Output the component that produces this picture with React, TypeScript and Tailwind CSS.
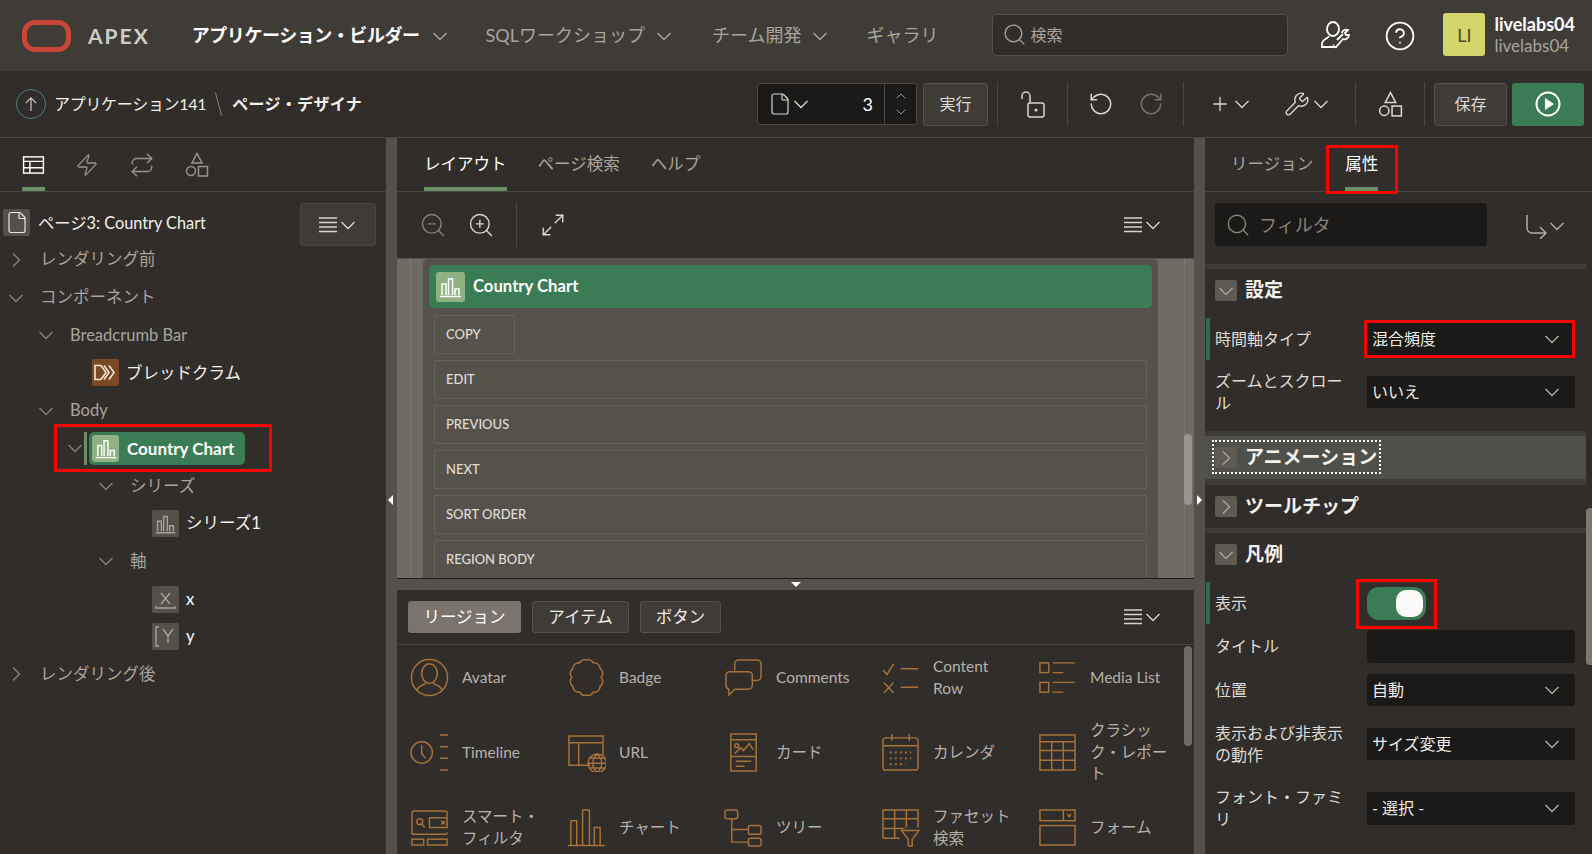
import type { ReactNode } from "react";
import {
  ChevronDown,
  ChevronUp,
  CircleHelp,
  File,
  Maximize2,
  Plus,
  Repeat,
  RotateCcw,
  RotateCw,
  Search,
  Wrench,
  Zap,
  ZoomIn,
  ZoomOut,
} from "lucide-react";

const Chev = ({ className = "" }: { className?: string }) => (
  <svg viewBox="0 0 18 18" className={`w-[18px] h-[18px] shrink-0 ${className}`} fill="none" stroke="currentColor" strokeWidth="1.4">
    <path d="M2.5 6l6.5 6.5L15.5 6" />
  </svg>
);

const ChevR = ({ className = "" }: { className?: string }) => (
  <svg viewBox="0 0 18 18" className={`w-[18px] h-[18px] shrink-0 ${className}`} fill="none" stroke="currentColor" strokeWidth="1.4">
    <path d="M6 2.5l6.5 6.5L6 15.5" />
  </svg>
);

const MenuLines = () => (
  <svg viewBox="0 0 18 16" className="w-[18px] h-4 shrink-0" stroke="currentColor" strokeWidth="1.6">
    <path d="M0 1h18M0 5.5h18M0 10h18M0 14.5h18" />
  </svg>
);

const MenuBtn = () => (
  <div className="flex items-center gap-[2px] text-[#d8d5d0]">
    <MenuLines />
    <Chev />
  </div>
);

const Shapes = ({ className = "" }: { className?: string }) => (
  <svg viewBox="0 0 24 26" className={className} fill="none" stroke="currentColor" strokeWidth="1.5">
    <path d="M12 1.5l5 9.5H7z" />
    <circle cx="6" cy="19" r="4.5" />
    <rect x="13.5" y="14.5" width="9" height="9.5" />
  </svg>
);

const Bars = ({ className = "" }: { className?: string }) => (
  <svg viewBox="0 0 27 27" className={className} fill="none" stroke="currentColor" strokeWidth="1.5">
    <path d="M5 22V11h4v11M11.5 22V6h4v16M18 22v-6h4v6M3 23.5h21" />
  </svg>
);

const P = ({ children }: { children: ReactNode }) => (
  <svg viewBox="0 0 40 40" className="w-[39px] h-[39px] shrink-0" fill="none" stroke="#a5733a" strokeWidth="1.5">
    {children}
  </svg>
);

const palette: { label: string; icon: ReactNode }[] = [
  {
    label: "Avatar",
    icon: (
      <P>
        <circle cx="20" cy="20" r="18.5" />
        <ellipse cx="20" cy="16" rx="8" ry="10" />
        <path d="M7 33c2-6 9-5 10-8M33 33c-2-6-9-5-10-8" />
      </P>
    ),
  },
  {
    label: "Badge",
    icon: (
      <P>
        <path d="M20 2a6 6 0 0 1 7 3a6 6 0 0 1 7 6a6 6 0 0 1 1 9a6 6 0 0 1-1 9a6 6 0 0 1-7 6a6 6 0 0 1-7 3a6 6 0 0 1-7-3a6 6 0 0 1-7-6a6 6 0 0 1-1-9a6 6 0 0 1 1-9a6 6 0 0 1 7-6a6 6 0 0 1 7-3z" />
      </P>
    ),
  },
  {
    label: "Comments",
    icon: (
      <P>
        <path d="M11 13V6a4 4 0 0 1 4-4h19a4 4 0 0 1 4 4v13a4 4 0 0 1-4 4h-5" />
        <path d="M5 14h20a4 4 0 0 1 4 4v10a4 4 0 0 1-4 4H11l-6 6v-6a4 4 0 0 1-3-4V18a4 4 0 0 1 3-4z" />
      </P>
    ),
  },
  {
    label: "Content Row",
    icon: (
      <P>
        <path d="M2 12l4 5 7-11M20 11h18M3 25l10 11M13 25L3 36M20 30h18" />
      </P>
    ),
  },
  {
    label: "Media List",
    icon: (
      <P>
        <rect x="2" y="5" width="9" height="10" />
        <rect x="2" y="25" width="9" height="10" />
        <path d="M15 5h23M15 15h11M15 25h23M15 35h11" />
      </P>
    ),
  },
  {
    label: "Timeline",
    icon: (
      <P>
        <circle cx="12" cy="20" r="11" />
        <path d="M12 12v9l4 5M31 2h8M31 14h8M31 26h8M31 38h8" />
      </P>
    ),
  },
  {
    label: "URL",
    icon: (
      <P>
        <path d="M24 33H2V3h35v20M2 10h35M12 10v23" />
        <circle cx="31" cy="31" r="9.5" />
        <path d="M21.5 31h19M31 21.5c-6 6-6 13 0 19M31 21.5c6 6 6 13 0 19M23 26h16M23 36h16" />
      </P>
    ),
  },
  {
    label: "カード",
    icon: (
      <P>
        <rect x="7" y="1" width="26" height="38" />
        <path d="M7 7h26M7 24h26M11 21l6-6 3 3 6-7 4 6M12 29h16M12 34h9" />
        <circle cx="13" cy="13" r="2" />
      </P>
    ),
  },
  {
    label: "カレンダ",
    icon: (
      <P>
        <rect x="2" y="5" width="36" height="33" rx="3" />
        <path d="M2 13h36M11 1v7M29 1v7" />
        <path d="M9 20h22M9 26h22M9 32h16" strokeDasharray="2 3.2" strokeWidth="2" />
      </P>
    ),
  },
  {
    label: "クラシック・レポート",
    icon: (
      <P>
        <rect x="2" y="2" width="36" height="36" />
        <path d="M2 9h36M2 18h36M2 28h36M14 9v29M26 9v29" />
      </P>
    ),
  },
  {
    label: "スマート・フィルタ",
    icon: (
      <P>
        <path d="M38 9V5a2 2 0 0 0-2-2H4a2 2 0 0 0-2 2v20a2 2 0 0 0 2 2h32a2 2 0 0 0 2-2" />
        <circle cx="10" cy="14" r="3" />
        <path d="M12 16l3 4" />
        <rect x="20" y="10" width="18" height="10" />
        <path d="M32 13l4 4M36 13l-4 4" />
        <rect x="2" y="32" width="12" height="6" />
        <rect x="18" y="32" width="20" height="6" />
      </P>
    ),
  },
  {
    label: "チャート",
    icon: (
      <P>
        <path d="M4 38V13h6v25M16 38V2h7v36M28 38V20h6v18M1 38.5h38" />
      </P>
    ),
  },
  {
    label: "ツリー",
    icon: (
      <P>
        <rect x="1" y="2" width="13" height="9" rx="2" />
        <rect x="25" y="18" width="13" height="9" rx="2" />
        <rect x="25" y="31" width="13" height="8" rx="2" />
        <path d="M8 11v24h17M8 22h17" />
      </P>
    ),
  },
  {
    label: "ファセット検索",
    icon: (
      <P>
        <path d="M2 31V2h36v18M2 11h36M2 21h22M2 31h17M14 2v29M26 2v18" />
        <path d="M21 23h18l-7 9v7h-4v-7z" />
      </P>
    ),
  },
  {
    label: "フォーム",
    icon: (
      <P>
        <rect x="2" y="2" width="36" height="11" />
        <path d="M26 2v11M30 6l2 3 2-3" />
        <rect x="2" y="18" width="36" height="20" />
      </P>
    ),
  },
];

const Sep = () => <div className="w-px h-[44px] bg-[#4a4641] shrink-0" />;

const Tab = ({ label, active = false, className = "" }: { label: string; active?: boolean; className?: string }) => (
  <div className={`h-full flex items-center relative text-[16.5px] ${active ? "text-white" : "text-[#a8a49d]"} ${className}`}>
    {label}
    {active && <div className="absolute left-0 right-0 bottom-0 h-1 bg-[#6b8e62]" />}
  </div>
);

const TreeHead = ({ pad, open = true, label }: { pad: string; open?: boolean; label: string }) => (
  <div className={`h-[37.7px] flex items-center text-[16.5px] text-[#a8a49d] ${pad}`}>
    {open ? <Chev className="text-[#86827b]" /> : <ChevR className="text-[#86827b]" />}
    <span className="ml-[15px]">{label}</span>
  </div>
);

const TreeLeaf = ({ pad, icon, label, bold = false }: { pad: string; icon: ReactNode; label: string; bold?: boolean }) => (
  <div className={`h-[37.7px] flex items-center gap-[7px] text-[16.5px] text-[#f2f0ec] ${pad} ${bold ? "font-medium" : ""}`}>
    <div className="w-[27px] h-[27px] rounded-[2px] bg-[#55514a] flex items-center justify-center text-[#a8a49d] shrink-0">{icon}</div>
    {label}
  </div>
);

const Section = ({ title, open = false, className = "", children }: { title: string; open?: boolean; className?: string; children?: ReactNode }) => (
  <div className={`bg-[#312d2a] ${className}`}>
    <div className="h-[43px] flex items-center pl-[10px]">
      <div className="w-[22px] h-[21px] rounded-[2px] bg-[#5f5b54] flex items-center justify-center text-[#aaa69f]">
        {open ? <Chev /> : <ChevR />}
      </div>
      <span className="ml-2 text-[19px] font-bold text-[#f4f2ee]">{title}</span>
    </div>
    {children}
  </div>
);

const Field = ({ label, mark = false, h, children }: { label: string; mark?: boolean; h: string; children?: ReactNode }) => (
  <div className={`flex items-center ${h}`}>
    <div className={`ml-px w-1 self-stretch ${mark ? "bg-[#2f6b4a]" : ""}`} />
    <div className="ml-[5px] w-[130px] text-base leading-[22px] text-[#dedbd6]">{label}</div>
    <div className="ml-[22px] w-[208px]">{children}</div>
  </div>
);

const Select = ({ value, h = "h-[32px]" }: { value?: string; h?: string }) => (
  <div className={`${h} rounded-[3px] bg-[#1b1a18] flex items-center justify-between pl-[5px] pr-[14px] text-base text-[#eeece8]`}>
    {value}
    <Chev className="text-[#b0aca5]" />
  </div>
);

const RedBox = ({ className }: { className: string }) => (
  <div className={`absolute border-[3px] border-[#ff0000] pointer-events-none ${className}`} />
);

const TOGGLE_ROWS = ["EDIT", "PREVIOUS", "NEXT", "SORT ORDER", "REGION BODY"];

export default function App() {
  return (
    <div className="w-full h-[854px] overflow-hidden flex flex-col bg-[#312d2a] text-white [font-family:Lato,'Noto_Sans_CJK_JP',sans-serif]">
      {/* Header */}
      <header className="h-[71px] shrink-0 bg-[#3f3c37] flex items-center pl-[22px]">
        <div className="w-[49px] h-[32px] rounded-[13px] border-[5px] border-[#c74634] shrink-0" />
        <span className="ml-[17px] text-[21px] font-bold tracking-[2px] text-[#cfccc6]">APEX</span>
        <span className="ml-[42px] text-[18px] font-bold tracking-[-0.45px] text-white whitespace-nowrap">アプリケーション・ビルダー</span>
        <Chev className="ml-[11px] text-[#a8a49d]" />
        <span className="ml-[37px] text-[18px] text-[#a8a49d] whitespace-nowrap">SQLワークショップ</span>
        <Chev className="ml-[10px] text-[#a8a49d]" />
        <span className="ml-[39px] text-[18px] text-[#a8a49d] whitespace-nowrap">チーム開発</span>
        <Chev className="ml-[10px] text-[#a8a49d]" />
        <span className="ml-[37px] text-[18px] text-[#a8a49d] whitespace-nowrap">ギャラリ</span>
        <div className="ml-[54px] mb-[2px] w-[296px] h-[42px] rounded-[5px] bg-[#312d2a] border border-[#55514a] flex items-center pl-[9px] text-base text-[#a8a49d] shrink-0">
          <Search className="w-[25px] h-[25px] mr-[3px]" strokeWidth={1.3} />
          検索
        </div>
        <svg viewBox="0 0 30 30" className="ml-[32px] w-[30px] h-[30px] shrink-0" fill="none" stroke="white" strokeWidth="1.8">
          <ellipse cx="13" cy="8" rx="6" ry="7" />
          <path d="M9 15c-1 3-7 3-7 8v3h15M17 19l6-6M22 12c0-3 4-4 6-3l-3 3 1 2 3 0c0 3-3 5-6 4l-7 8c-2 1-3-1-2-2" />
        </svg>
        <CircleHelp className="ml-[34px] w-[32px] h-[32px] shrink-0 text-white" strokeWidth={1.4} />
        <div className="ml-[27px] mb-[2px] w-[42px] h-[43px] rounded-[3px] bg-[#d3d46a] text-[#4a4a20] text-lg flex items-center justify-center shrink-0">LI</div>
        <div className="ml-[9px] mb-[2px] leading-[22px]">
          <div className="text-[18px] font-bold text-white">livelabs04</div>
          <div className="text-[17px] text-[#a8a49d]">livelabs04</div>
        </div>
      </header>

      {/* Toolbar */}
      <div className="h-[67px] shrink-0 flex items-center pl-4 pr-2 border-b border-[#4a4641]">
        <div className="w-[30px] h-[30px] rounded-full border border-[#4f8088] flex items-center justify-center text-[#c8c5bf] shrink-0">
          <svg viewBox="0 0 16 18" className="w-[14px] h-4" fill="none" stroke="currentColor" strokeWidth="1.4">
            <path d="M8 17V2M2 8l6-6 6 6" />
          </svg>
        </div>
        <span className="ml-2 text-base tracking-[-0.3px] text-[#f2f0ec] whitespace-nowrap">アプリケーション141</span>
        <span className="ml-[12px] w-px h-[24px] rotate-[-15deg] bg-[#86827b] shrink-0" />
        <span className="ml-[13px] text-base font-bold tracking-[0.3px] text-[#f2f0ec] whitespace-nowrap">ページ・デザイナ</span>
        <div className="ml-auto flex items-center">
          <div className="w-[160px] h-[42px] rounded-[3px] bg-[#1b1a18] border border-[#4a4641] flex items-center pl-[10px] text-[#d8d5d0]">
            <File className="w-[24px] h-[24px]" strokeWidth={1.2} />
            <Chev />
            <span className="ml-auto mr-[11px] text-lg text-white">3</span>
            <div className="w-[32px] h-full border-l border-[#4a4641] flex flex-col items-center justify-center text-[#b0aca5]">
              <ChevronUp className="w-4 h-4" strokeWidth={1.3} />
              <ChevronDown className="w-4 h-4" strokeWidth={1.3} />
            </div>
          </div>
          <div className="ml-[6px] w-[65px] h-[43px] rounded-[3px] bg-[#3f3c37] border border-[#55514a] flex items-center justify-center text-base text-[#dedbd6]">実行</div>
          <div className="ml-[9px]"><Sep /></div>
          <div className="w-[69px] flex justify-center">
            <svg viewBox="0 0 26 28" className="w-[26px] h-[28px] text-[#d8d5d0]" fill="none" stroke="currentColor" strokeWidth="1.5">
              <rect x="8" y="13" width="16" height="14" rx="2" />
              <path d="M2 9V6a4 4 0 0 1 8 0v7" />
              <circle cx="16" cy="20" r="0.8" fill="currentColor" />
            </svg>
          </div>
          <Sep />
          <div className="w-[115px] flex items-center justify-center gap-[24px]">
            <RotateCcw className="w-[26px] h-[26px] text-[#d8d5d0]" strokeWidth={1.4} />
            <RotateCw className="w-[26px] h-[26px] text-[#777369]" strokeWidth={1.4} />
          </div>
          <Sep />
          <div className="w-[171px] flex items-center justify-center gap-[33px] text-[#d8d5d0]">
            <div className="flex items-center gap-[2px]">
              <Plus className="w-[22px] h-[22px]" strokeWidth={1.4} />
              <Chev />
            </div>
            <div className="flex items-center gap-[2px]">
              <Wrench className="w-[26px] h-[26px]" strokeWidth={1.3} />
              <Chev />
            </div>
          </div>
          <Sep />
          <div className="w-[68px] flex justify-center">
            <Shapes className="w-[25px] h-[27px] text-[#d8d5d0]" />
          </div>
          <Sep />
          <div className="ml-[9px] w-[73px] h-[43px] rounded-[3px] bg-[#3f3c37] border border-[#55514a] flex items-center justify-center text-base text-[#dedbd6]">保存</div>
          <div className="ml-[5px] w-[72px] h-[43px] rounded-[3px] bg-[#3a7d55] flex items-center justify-center">
            <svg viewBox="0 0 26 26" className="w-[26px] h-[26px]" fill="none" stroke="white" strokeWidth="2">
              <circle cx="13" cy="13" r="11.5" />
              <path d="M10 7l9 6-9 6z" fill="white" stroke="none" />
            </svg>
          </div>
        </div>
      </div>

      <div className="flex-1 flex min-h-0">
        {/* Left panel */}
        <aside className="w-[386px] shrink-0 flex flex-col">
          <div className="h-[54px] shrink-0 border-b border-[#4a4641] flex items-stretch pl-[22px] gap-[30px] text-[#98948d]">
            <div className="relative w-[23px] flex items-center justify-center text-white">
              <svg viewBox="0 0 24 20" className="w-[23px] h-[18px]" fill="none" stroke="currentColor" strokeWidth="1.6">
                <rect x="1" y="1" width="22" height="18" />
                <path d="M1 6h22M1 13h22M8 6v13" />
              </svg>
              <div className="absolute left-0 right-0 bottom-0 h-1 bg-[#6b8e62]" />
            </div>
            <div className="flex items-center"><Zap className="w-[24px] h-[26px]" strokeWidth={1.3} /></div>
            <div className="flex items-center"><Repeat className="w-[26px] h-[26px]" strokeWidth={1.3} /></div>
            <div className="flex items-center"><Shapes className="w-[24px] h-[26px]" /></div>
          </div>
          <div className="h-[49px] shrink-0 flex items-start pt-[11px] pl-[3px] pr-[10px]">
            <div className="mt-[6px] w-[27px] h-[27px] rounded-[2px] bg-[#55514a] flex items-center justify-center text-[#e8e6e2]">
              <File className="w-[24px] h-[25px]" strokeWidth={1.2} />
            </div>
            <span className="ml-[8px] mt-[6px] leading-[27px] text-[16.3px] text-[#f2f0ec]">ページ3: Country Chart</span>
            <div className="ml-auto w-[76px] h-[43px] rounded-[3px] bg-[#3f3c37] border border-[#4a4641] flex items-center justify-center">
              <MenuBtn />
            </div>
          </div>
          <div>
            <TreeHead pad="pl-[7px]" open={false} label="レンダリング前" />
            <TreeHead pad="pl-[7px]" label="コンポーネント" />
            <TreeHead pad="pl-[37px]" label="Breadcrumb Bar" />
            <div className="h-[37.7px] flex items-center gap-[7px] text-[16.5px] text-[#f2f0ec] pl-[92px]">
              <div className="w-[27px] h-[27px] rounded-[2px] bg-[#7a4a28] flex items-center justify-center text-[#f3e6d0] shrink-0">
                <svg viewBox="0 0 27 27" className="w-[27px] h-[27px]" fill="none" stroke="currentColor" strokeWidth="1.6">
                  <path d="M3 6.5h6l5 7-5 7H3zM12 6.5l5 7-5 7M17 6.5l5 7-5 7" />
                </svg>
              </div>
              ブレッドクラム
            </div>
            <TreeHead pad="pl-[37px]" label="Body" />
            <div className="h-[37.7px] flex items-center pl-[66px] text-[#86827b]">
              <Chev />
              <div className="relative flex items-center h-[33px]">
                <div className="w-[3px] h-[33px] bg-[#6b8e62]" />
                <div className="ml-[2px] w-[156px] h-[33px] rounded-[5px] bg-[#3a7d55] flex items-center pl-[3px] text-white font-bold">
                  <div className="w-[27px] h-[27px] rounded-[3px] bg-[#8fb184] flex items-center justify-center">
                    <Bars className="w-[26px] h-[26px]" />
                  </div>
                  <span className="ml-2 text-[17px]">Country Chart</span>
                </div>
                <RedBox className="left-[-30px] right-[-27px] -top-[8px] -bottom-[7px]" />
              </div>
            </div>
            <TreeHead pad="pl-[97px]" label="シリーズ" />
            <TreeLeaf pad="pl-[152px]" label="シリーズ1" icon={<Bars className="w-[25px] h-[25px]" />} />
            <TreeHead pad="pl-[97px]" label="軸" />
            <TreeLeaf
              pad="pl-[152px]"
              label="x"
              bold
              icon={
                <svg viewBox="0 0 27 27" className="w-[27px] h-[27px]" fill="none" stroke="currentColor" strokeWidth="1.4">
                  <path d="M9 7l9 11M18 7l-9 11M4 20v2h19v-2" />
                </svg>
              }
            />
            <TreeLeaf
              pad="pl-[152px]"
              label="y"
              bold
              icon={
                <svg viewBox="0 0 27 27" className="w-[27px] h-[27px]" fill="none" stroke="currentColor" strokeWidth="1.4">
                  <path d="M7 4H4v19h3M11 6l5 7 5-7M16 13v7" />
                </svg>
              }
            />
            <TreeHead pad="pl-[7px]" open={false} label="レンダリング後" />
          </div>
        </aside>

        {/* Left splitter */}
        <div className="w-[11px] shrink-0 bg-[#55514a] relative">
          <div className="absolute left-[2px] top-[357px] w-0 h-0 border-y-[5px] border-y-transparent border-r-[5px] border-r-white" />
        </div>

        {/* Middle */}
        <main className="flex-1 min-w-0 flex flex-col">
          <div className="h-[54px] shrink-0 border-b border-[#4a4641] flex items-stretch pl-[27px]">
            <Tab label="レイアウト" active />
            <Tab label="ページ検索" className="ml-[31px]" />
            <Tab label="ヘルプ" className="ml-[31px]" />
          </div>
          <div className="h-[66px] shrink-0 flex items-center pl-[22px] pr-[32px]">
            <ZoomOut className="w-[28px] h-[28px] text-[#86827b]" strokeWidth={1.2} />
            <ZoomIn className="ml-[20px] w-[28px] h-[28px] text-[#d8d5d0]" strokeWidth={1.2} />
            <div className="ml-[21px] w-px h-[44px] bg-[#4a4641]" />
            <Maximize2 className="ml-[23px] w-[26px] h-[26px] text-[#d8d5d0]" strokeWidth={1.3} />
            <div className="ml-auto"><MenuBtn /></div>
          </div>

          {/* Canvas */}
          <div className="h-[320px] shrink-0 bg-[#6f6a64] border-t border-[#55514a] flex relative overflow-hidden">
            <div className="ml-[13px] w-[13px] border-l border-dotted border-[#8a867f]" />
            <div className="w-[735px] bg-[#55524b] pl-[6px] pt-[6px] pr-[6px] rounded-t-[5px] flex flex-col">
              <div className="h-[43px] rounded-[5px] bg-[#3a7d55] flex items-center pl-[7px] text-white shrink-0">
                <div className="w-[29px] h-[30px] rounded-[3px] bg-[#8fb184] flex items-center justify-center">
                  <Bars className="w-[27px] h-[27px]" />
                </div>
                <span className="ml-2 text-[16.7px] font-bold">Country Chart</span>
              </div>
              <div className="mt-[7px] pl-[5px] pr-[5px] flex flex-col gap-[6px] text-[#e0ddd8] text-[13px] font-medium">
                <div className="w-[81px] h-[39px] shrink-0 border border-dotted border-[#77736c] rounded-[2px] flex items-center pl-[11px]">COPY</div>
                {TOGGLE_ROWS.map((row) => (
                  <div key={row} className="h-[39px] shrink-0 border border-dotted border-[#77736c] rounded-[2px] flex items-center pl-[11px]">
                    {row}
                  </div>
                ))}
              </div>
            </div>
            <div className="ml-[26px] w-[1px] border-l border-dotted border-[#8a867f]" />
            <div className="absolute right-[2px] top-[175px] w-2 h-[71px] rounded-[4px] bg-[#98948d]" />
          </div>

          {/* Horizontal splitter */}
          <div className="h-[12px] shrink-0 bg-[#55514a] border-t border-[#1b1a18] relative">
            <div className="absolute left-[394px] top-[3px] w-0 h-0 border-x-[5px] border-x-transparent border-t-[5px] border-t-white" />
          </div>

          {/* Gallery */}
          <div className="flex-1 min-h-0 relative overflow-hidden">
            <div className="h-[55px] border-b border-[#4a4641] flex items-center pl-[11px] pr-[32px] text-[16.5px] gap-[11px]">
              <div className="w-[113px] h-[32px] rounded-[3px] bg-[#7a746d] flex items-center justify-center text-white">リージョン</div>
              <div className="w-[97px] h-[32px] rounded-[3px] bg-[#3f3c37] border border-[#55514a] flex items-center justify-center text-[#eeece8]">アイテム</div>
              <div className="w-[81px] h-[32px] rounded-[3px] bg-[#3f3c37] border border-[#55514a] flex items-center justify-center text-[#eeece8]">ボタン</div>
              <div className="ml-auto"><MenuBtn /></div>
            </div>
            <div className="grid grid-cols-[repeat(5,157px)] auto-rows-[75px] pl-[13px] -mt-[5px]">
              {palette.map((item) => (
                <div key={item.label} className="flex items-center gap-[13px]">
                  {item.icon}
                  <span className="w-[80px] text-[15.5px] leading-[21.5px] text-[#b5b1aa]">{item.label}</span>
                </div>
              ))}
            </div>
            <div className="absolute right-[2px] top-[56px] w-2 h-[100px] rounded-[4px] bg-[#6f6a64]" />
          </div>
        </main>

        {/* Right splitter */}
        <div className="w-[11px] shrink-0 bg-[#55514a] relative">
          <div className="absolute left-[3px] top-[357px] w-0 h-0 border-y-[5px] border-y-transparent border-l-[5px] border-l-white" />
        </div>

        {/* Right panel */}
        <aside className="w-[387px] shrink-0 flex flex-col relative">
          <div className="h-[54px] shrink-0 border-b border-[#4a4641] flex items-stretch pl-[26px]">
            <Tab label="リージョン" />
            <div className="ml-[32px] relative flex items-stretch">
              <Tab label="属性" active />
              <RedBox className="-left-[19px] -right-[20px] top-[7px] bottom-[-3px]" />
            </div>
          </div>
          <div className="h-[72px] shrink-0 flex items-start pt-[11px] pl-[10px]">
            <div className="w-[272px] h-[43px] rounded-[3px] bg-[#1b1a18] flex items-center pl-[10px] text-[#86827b] text-lg">
              <Search className="w-[26px] h-[26px] mr-[8px]" strokeWidth={1.3} />
              フィルタ
            </div>
            <div className="ml-[37px] mt-[10px] flex items-center text-[#b0aca5]">
              <svg viewBox="0 0 24 26" className="w-[24px] h-[26px]" fill="none" stroke="currentColor" strokeWidth="1.5">
                <path d="M3 2v13a5 5 0 0 0 5 5h14M16 14l6 6-6 6" />
              </svg>
              <Chev />
            </div>
          </div>
          <div className="flex-1 min-h-0 bg-[#3f3c37] mr-[6px] pt-[5px] flex flex-col gap-[5px]">
            <Section title="設定" open className="pb-[8px]">
              <div className="h-[6px]" />
              <Field label="時間軸タイプ" mark h="h-[42px]">
                <div className="relative">
                  <Select value="混合頻度" />
                  <RedBox className="-left-[3px] right-0 -top-[3px] -bottom-[3px]" />
                </div>
              </Field>
              <Field label="ズームとスクロール" h="h-[63px]">
                <Select value="いいえ" />
              </Field>
            </Section>
            <Section title="アニメーション" className="!bg-[#4f5049] relative">
              <div className="absolute left-[7px] top-[4px] w-[169px] h-[34px] border-[2px] border-dotted border-white" />
            </Section>
            <Section title="ツールチップ" className="mt-[1px]" />
            <Section title="凡例" open className="flex-1">
              <div className="h-[6px]" />
              <Field label="表示" mark h="h-[42px]">
                <div className="relative w-[59px] h-[33px] rounded-[12px] bg-[#3a7d55] flex items-center justify-end pr-[3px]">
                  <div className="w-[27px] h-[27px] rounded-[10px] bg-[#fcfbfa]" />
                  <RedBox className="-left-[11px] -right-[11px] -top-[8px] -bottom-[9px]" />
                </div>
              </Field>
              <Field label="タイトル" h="h-[44px]">
                <div className="h-[33px] rounded-[3px] bg-[#1b1a18]" />
              </Field>
              <Field label="位置" h="h-[44px]">
                <Select value="自動" />
              </Field>
              <Field label="表示および非表示の動作" h="h-[64px]">
                <Select value="サイズ変更" />
              </Field>
              <Field label="フォント・ファミリ" h="h-[64px]">
                <Select value="- 選択 -" h="h-[33px]" />
              </Field>
            </Section>
          </div>
          <div className="absolute right-0 top-[370px] w-[6px] h-[157px] rounded-l-[4px] bg-[#7c7870]" />
        </aside>
      </div>
    </div>
  );
}
